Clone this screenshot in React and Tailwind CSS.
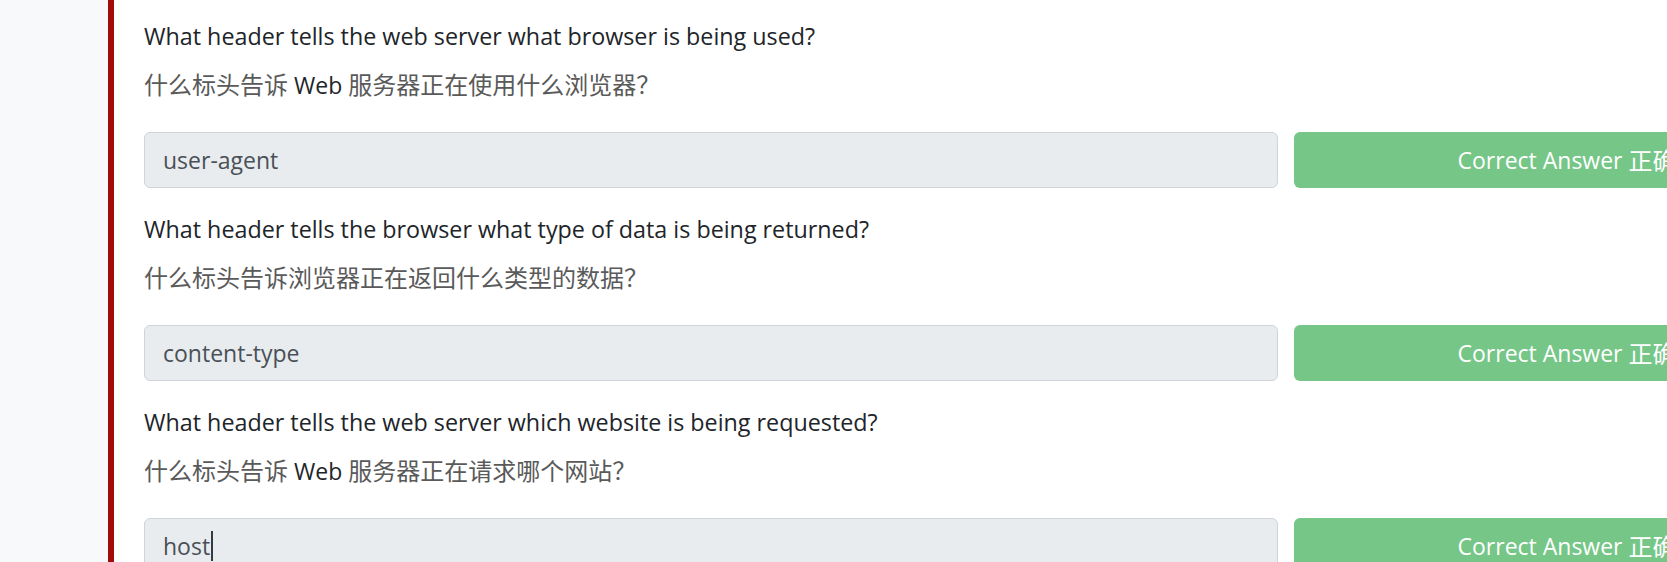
const questions = [
  {
    en: 'What header tells the web server what browser is being used?',
    zh: [
      { t: '什么标头告诉', cjk: true },
      { t: ' Web ', cjk: false },
      { t: '服务器正在使用什么浏览器？', cjk: true },
    ],
    answer: 'user-agent',
  },
  {
    en: 'What header tells the browser what type of data is being returned?',
    zh: [{ t: '什么标头告诉浏览器正在返回什么类型的数据？', cjk: true }],
    answer: 'content-type',
  },
  {
    en: 'What header tells the web server which website is being requested?',
    zh: [
      { t: '什么标头告诉', cjk: true },
      { t: ' Web ', cjk: false },
      { t: '服务器正在请求哪个网站？', cjk: true },
    ],
    answer: 'host',
    caret: true,
  },
];

const Question = ({ q }) => (
  <div className="mb-[23px]">
    <p className="text-[23.3px] leading-[36px] text-[#212529] whitespace-nowrap">{q.en}</p>
    <p className="mt-[12px] text-[23px] leading-[36px] whitespace-pre">
      {q.zh.map((part, i) =>
        part.cjk ? (
          <span key={i} className="font-['Noto_Sans_CJK_SC',sans-serif] text-[24px] text-[#5a5a5a]">
            {part.t}
          </span>
        ) : (
          <span key={i} className="text-[#212529]">{part.t}</span>
        )
      )}
    </p>
    <div className="mt-[29px] flex gap-[16px]">
      <div className="w-[1134px] h-[56px] rounded-[6px] border border-[#ced4da] bg-[#e9ecef] px-[18px] flex items-center text-[23px] text-[#495057]">
        {q.answer}
        {q.caret && <span className="inline-block w-[2px] h-[30px] bg-[#343a40] ml-[1px]" />}
      </div>
      <div className="w-[594px] h-[56px] shrink-0 rounded-[6px] bg-[#75c687] text-white flex items-center justify-center text-[23px] whitespace-pre">
        Correct Answer <span className="font-['Noto_Sans_CJK_SC',sans-serif] text-[24px]">正确答案</span>
      </div>
    </div>
  </div>
);

export default function App() {
  return (
    <div className="w-[1667px] h-[562px] overflow-hidden flex bg-white font-['Open_Sans',sans-serif]">
      <div className="w-[108px] shrink-0 bg-[#f8f9fa]" />
      <div className="w-[6px] shrink-0 bg-[#a30b0b]" />
      <div className="pl-[30px] pt-[18px] shrink-0">
        {questions.map((q, i) => (
          <Question key={i} q={q} />
        ))}
      </div>
    </div>
  );
}
